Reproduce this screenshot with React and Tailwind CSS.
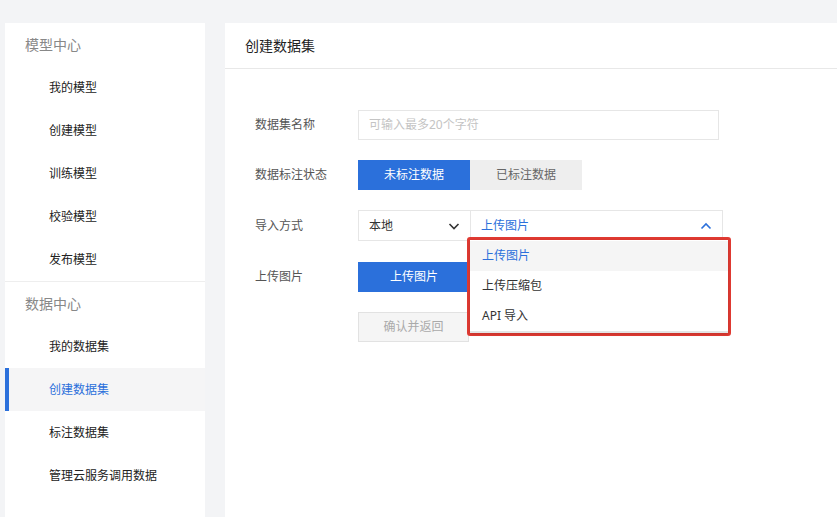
import React from 'react';

const FONT = { fontFamily: '"Noto Sans", "Noto Sans CJK SC", sans-serif' };

const groups = [
  { title: '模型中心', items: ['我的模型', '创建模型', '训练模型', '校验模型', '发布模型'] },
  { title: '数据中心', items: ['我的数据集', '创建数据集', '标注数据集', '管理云服务调用数据'] },
];

const Chevron = ({ up, className }) => (
  <svg width="14" height="14" viewBox="0 0 14 14" className={className} fill="none" stroke="currentColor" strokeWidth="1.6">
    {up ? <path d="M2.5 9.5 L7 5 L11.5 9.5" /> : <path d="M2.5 5 L7 9.5 L11.5 5" />}
  </svg>
);

const Sidebar = () => (
  <div className="w-[200px] ml-[5px] bg-white shrink-0">
    {groups.map((g, gi) => (
      <div key={g.title} className={gi > 0 ? 'border-t border-[#eeeeee]' : ''}>
        <div className="h-[43px] flex items-center pl-5 text-[14px] text-[#888888]">{g.title}</div>
        {g.items.map(item => {
          const active = item === '创建数据集';
          return (
            <div
              key={item}
              className={`h-[43px] flex items-center text-[12px] ${active ? 'bg-[#f5f5f6] text-[#2b70db] border-l-4 border-[#2b70db] pl-10' : 'text-[#222222] pl-11'}`}
            >
              {item}
            </div>
          );
        })}
      </div>
    ))}
  </div>
);

const Row = ({ label, children, className = 'h-[30px]' }) => (
  <div className={`flex items-center ${className}`}>
    <div className="w-[103px] shrink-0 text-[12px] text-[#555555]">{label}</div>
    {children}
  </div>
);

export default function App() {
  return (
    <div style={FONT} className="w-[837px] h-[517px] bg-[#f3f4f6] pt-[23px] flex gap-5 overflow-hidden">
      <Sidebar />
      <div className="flex-1 bg-white">
        <div className="h-[46px] border-b border-[#e8e8e8] flex items-center px-5 text-[14px] text-[#222222]">创建数据集</div>
        <div className="pl-[30px] pt-[41px] flex flex-col gap-5">
          <Row label="数据集名称">
            <div className="w-[361px] h-[30px] border border-[#e6e6e6] flex items-center px-[10px] text-[12px] text-[#c4c4c4]">可输入最多20个字符</div>
          </Row>
          <Row label="数据标注状态">
            <div className="flex h-[30px] text-[12px]">
              <div className="w-[112px] bg-[#2b70db] text-white flex items-center justify-center">未标注数据</div>
              <div className="w-[112px] bg-[#eeeeee] text-[#666666] flex items-center justify-center">已标注数据</div>
            </div>
          </Row>
          <Row label="导入方式" className="h-[31px]">
            <div className="flex h-[31px] text-[12px]">
              <div className="w-[113px] border border-[#e6e6e6] flex items-center justify-between pl-[10px] pr-[9px] text-[#333333]">
                本地
                <Chevron className="text-[#333333]" />
              </div>
              <div className="relative w-[252px] border border-l-0 border-[#e6e6e6] flex items-center justify-between pl-[10px] pr-[9px] text-[#2b70db]">
                上传图片
                <Chevron up className="text-[#2b70db]" />
                <div className="absolute left-[-4px] top-[26px] w-[264px] h-[99px] border-[3px] border-[#e03a32] rounded-[3px] z-10">
                  <div className="bg-white h-full border-b-2 border-[#e4e4e4] shadow-[0_1px_3px_rgba(0,0,0,0.15)] pt-[1px]">
                    <div className="h-[30px] flex items-center pl-[12px] bg-[#f5f5f5] text-[#2b70db]">上传图片</div>
                    <div className="h-[30px] flex items-center pl-[12px] text-[#333333]">上传压缩包</div>
                    <div className="h-[30px] flex items-center pl-[12px] text-[#333333]">API 导入</div>
                  </div>
                </div>
              </div>
            </div>
          </Row>
          <Row label="上传图片" className="h-[30px] mt-[1px]">
            <div className="w-[112px] h-[30px] bg-[#2b70db] text-white text-[12px] flex items-center justify-center">上传图片</div>
          </Row>
          <Row label="">
            <div className="w-[111px] h-[30px] bg-[#f5f5f5] border border-[#e2e2e2] text-[#aaaaaa] text-[12px] flex items-center justify-center">确认并返回</div>
          </Row>
        </div>
      </div>
    </div>
  );
}
